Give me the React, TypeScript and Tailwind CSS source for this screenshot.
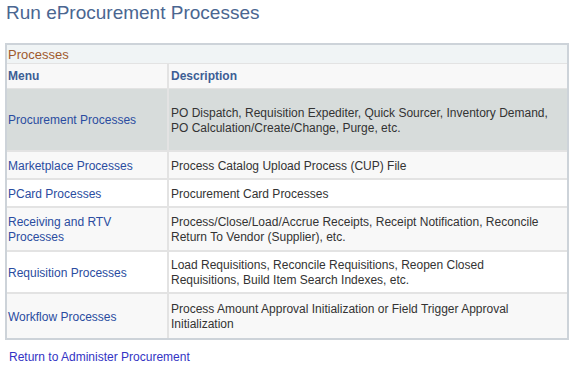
import React from "react";

const rows: { menu: string; desc: string[]; h: string; bg: string }[] = [
  {
    menu: "Procurement Processes",
    desc: [
      "PO Dispatch, Requisition Expediter, Quick Sourcer, Inventory Demand,",
      "PO Calculation/Create/Change, Purge, etc.",
    ],
    h: "h-[63px]",
    bg: "bg-[#d7dcdb]",
  },
  { menu: "Marketplace Processes", desc: ["Process Catalog Upload Process (CUP) File"], h: "h-[28px]", bg: "bg-[#f8f8f8]" },
  { menu: "PCard Processes", desc: ["Procurement Card Processes"], h: "h-[28px]", bg: "bg-white" },
  {
    menu: "Receiving and RTV\nProcesses",
    desc: ["Process/Close/Load/Accrue Receipts, Receipt Notification, Reconcile", "Return To Vendor (Supplier), etc."],
    h: "h-[44px]",
    bg: "bg-[#f8f8f8]",
  },
  {
    menu: "Requisition Processes",
    desc: ["Load Requisitions, Reconcile Requisitions, Reopen Closed", "Requisitions, Build Item Search Indexes, etc."],
    h: "h-[42px]",
    bg: "bg-white",
  },
  {
    menu: "Workflow Processes",
    desc: ["Process Amount Approval Initialization or Field Trigger Approval", "Initialization"],
    h: "h-[44px]",
    bg: "bg-[#f8f8f8]",
  },
];

export default function App() {
  return (
    <div className="w-[575px] h-[375px] bg-white font-['Liberation_Sans',Arial,sans-serif] text-[12px] overflow-hidden">
      <h1 className="pl-[6px] pt-[1px] text-[19px] leading-[23px] text-[#4a6691]">Run eProcurement Processes</h1>
      <div className="ml-[5px] mt-[19px] w-[564px] border-2 border-[#cdd3d9]">
        <div className="h-[19px] bg-[#f0f4f5] border-b border-[#e3e3e3] pl-[1px] text-[13px] leading-[19px] text-[#a0592c]">
          Processes
        </div>
        <div className="flex h-[25px] bg-[#f8f8f8] border-b border-[#e3e3e3] font-bold text-[#3d5e95]">
          <div className="w-[162px] border-r-2 border-[#e3e3e3] pl-[1px] flex items-center">Menu</div>
          <div className="flex-1 pl-[2px] flex items-center">Description</div>
        </div>
        {rows.map((r, i) => (
          <div key={i} className={`flex ${r.h} ${r.bg} ${i < rows.length - 1 ? "border-b-2 border-[#e3e3e3]" : ""}`}>
            <div className="w-[162px] border-r-2 border-[#e3e3e3] pl-[1px] pt-[2px] flex items-center text-[#2a4ca0] leading-[15px] whitespace-pre-line">
              {r.menu}
            </div>
            <div className="flex-1 pl-[2px] pt-[2px] flex flex-col justify-center text-[#333333] leading-[15px]">
              {r.desc.map((d, j) => (
                <div key={j}>{d}</div>
              ))}
            </div>
          </div>
        ))}
      </div>
      <div className="pl-[9px] mt-[8px] text-[#3333c4]">Return to Administer Procurement</div>
    </div>
  );
}
